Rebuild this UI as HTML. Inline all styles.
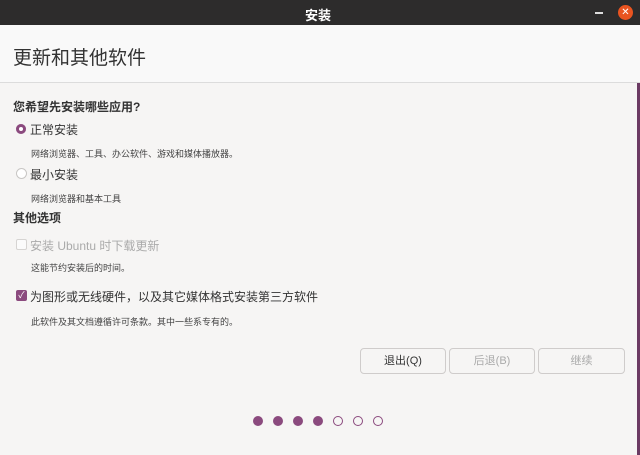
<!DOCTYPE html>
<html><head><meta charset="utf-8"><style>
body{margin:0;width:640px;height:455px;overflow:hidden;background:#f6f5f4;font-family:"Liberation Sans","Noto Sans CJK SC",sans-serif;position:relative;color:#333}
.t{position:absolute;white-space:nowrap}
.bar{position:absolute;left:0;top:0;width:640px;height:25px;background:#2d2c2c}
.hdr{position:absolute;left:0;top:25px;width:640px;height:57px;background:#f9f9f9;border-bottom:1px solid #dcdcdc}
.btn{position:absolute;top:348px;height:24px;border:1px solid #cfcccb;border-radius:4px;background:#f6f5f4;font-size:11px;text-align:center;line-height:24px}
.dot{position:absolute;top:416px;width:10px;height:10px;border-radius:50%;border:1px solid #8b4a7e;box-sizing:border-box}
.f{background:#8b4a7e}
.s{font-size:9px;color:#444}
</style></head><body>
<div class="bar"></div>
<div class="t" style="left:305px;top:5px;color:#fff;font-size:13px;font-weight:bold">安装</div>
<div class="t" style="left:595px;top:12px;width:8px;height:2px;background:#ddd"></div>
<div class="t" style="left:618px;top:5px;width:15px;height:15px;border-radius:50%;background:#e95420;color:#fff;font-size:10px;text-align:center;line-height:15px">✕</div>
<div class="t" style="left:637px;top:25px;width:3px;height:430px;background:#6b3a63"></div>
<div class="hdr"></div>
<div class="t" style="left:13px;top:43px;font-size:19px;color:#333">更新和其他软件</div>
<div class="t" style="left:13px;top:98px;font-size:12px;font-weight:bold">您希望先安装哪些应用?</div>
<div class="t" style="left:16px;top:124px;width:10px;height:10px;border-radius:50%;background:#8b4a7e;box-shadow:inset 0 0 0 3px #8b4a7e,inset 0 0 0 6px #fff"></div>
<div class="t" style="left:30px;top:121px;font-size:12px">正常安装</div>
<div class="t s" style="left:31px;top:147px">网络浏览器、工具、办公软件、游戏和媒体播放器。</div>
<div class="t" style="left:16px;top:168px;width:11px;height:11px;border-radius:50%;border:1px solid #c8c6c4;background:#fff;box-sizing:border-box"></div>
<div class="t" style="left:30px;top:166px;font-size:12px">最小安装</div>
<div class="t s" style="left:31px;top:192px">网络浏览器和基本工具</div>
<div class="t" style="left:13px;top:209px;font-size:12px;font-weight:bold">其他选项</div>
<div class="t" style="left:16px;top:239px;width:11px;height:11px;border-radius:2px;border:1px solid #d6d4d2;background:#fbfbfb;box-sizing:border-box"></div>
<div class="t" style="left:30px;top:237px;font-size:12px;color:#aaa">安装 Ubuntu 时下载更新</div>
<div class="t s" style="left:31px;top:261px">这能节约安装后的时间。</div>
<div class="t" style="left:16px;top:290px;width:11px;height:11px;border-radius:2px;background:#8b4a7e;color:#fff;font-size:9px;line-height:11px;text-align:center">✓</div>
<div class="t" style="left:30px;top:288px;font-size:12px">为图形或无线硬件，以及其它媒体格式安装第三方软件</div>
<div class="t s" style="left:31px;top:315px">此软件及其文档遵循许可条款。其中一些系专有的。</div>
<div class="btn" style="left:360px;width:84px">退出(Q)</div>
<div class="btn" style="left:449px;width:84px;color:#aaa">后退(B)</div>
<div class="btn" style="left:538px;width:85px;color:#aaa">继续</div>
<div class="dot f" style="left:253px"></div>
<div class="dot f" style="left:273px"></div>
<div class="dot f" style="left:293px"></div>
<div class="dot f" style="left:313px"></div>
<div class="dot" style="left:333px"></div>
<div class="dot" style="left:353px"></div>
<div class="dot" style="left:373px"></div>
</body></html>
